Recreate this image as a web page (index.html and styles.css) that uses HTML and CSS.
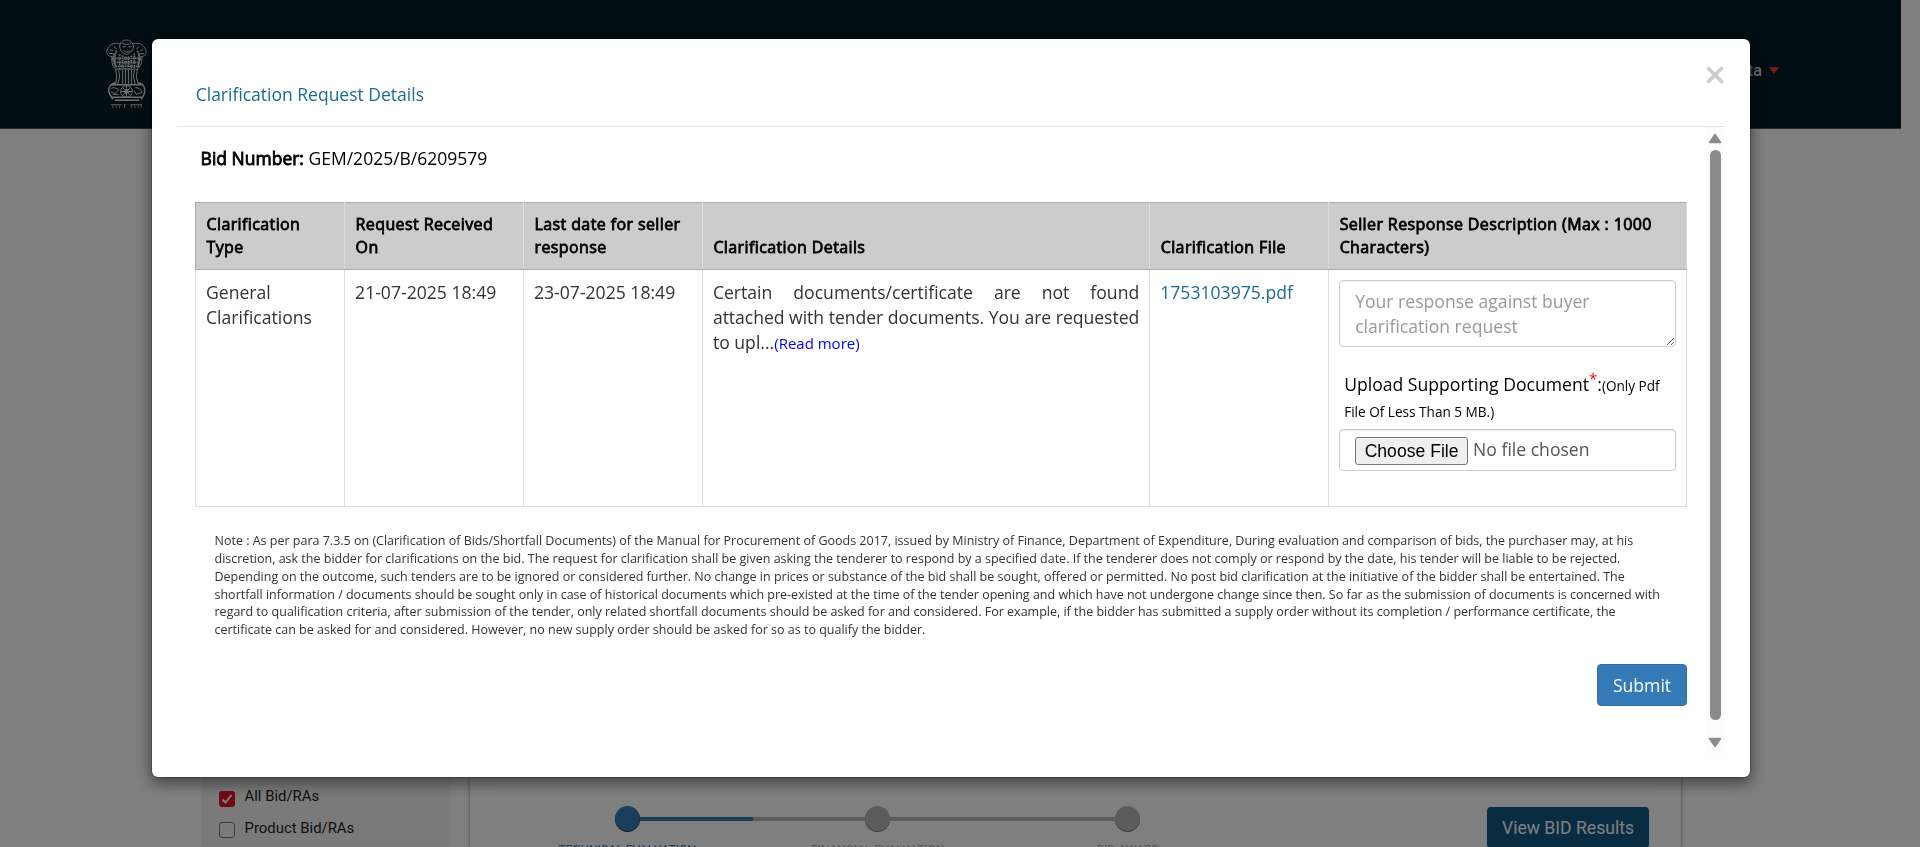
FILE: index.html
```html
<!DOCTYPE html>
<html lang="en">
<head>
<meta charset="utf-8">
<title>Clarification Request Details</title>
<link rel="stylesheet" href="styles.css">
</head>
<body>
<div class="page">
  <header class="site-header">
    <svg class="emblem" viewBox="0 0 42 72" preserveAspectRatio="none" fill="none" stroke="#e0e0e0" stroke-width="1">
      <path d="M14 7c1-5 5-6 7-6s6 1 7 6c0 4-2 7-7 9-5-2-7-5-7-9z"/>
      <path d="M14 5C8 3 3 6 1 12c-1 4 2 6 5 6l1 4M28 5c6-2 11 1 13 7 1 4-2 6-5 6l-1 4"/>
      <path d="M17 8h3M23 8h3M18 12c2 2 5 2 7 0M16 4c2 2 8 2 10 0M4 11l3 1M38 11l-3 1M3 15h4M39 15h-4M8 8l3 2M34 8l-3 2"/>
      <path d="M6 18c0 6 0 10 4 13h22c4-3 5-8 5-13"/>
      <path stroke-width="1.7" stroke-dasharray="1.6 .7" d="M8 15c-1 5 0 10 2 14M11 12c-3 5-3 12 0 18M14 16v15M17 17v14M20 18v13M23 18v13M26 17v14M29 15v15M32 12c3 5 2 12 0 18M34 15c1 5 0 10-1 14M9 20h25M9 24h25M10 28h22"/>
      <path d="M10 31l1 8-1 7M13 32l1 7-2 8M17 32v15M20 32v14M23 32v14M26 32v15M29 32l-1 7 2 8M32 31l-1 8 2 7"/>
      <path stroke-width="1.5" d="M10 45c-6 1-9 6-6 12l3 5M33 45c6 1 8 6 6 12l-3 5M6 47h30M5 60h33M9 63h25"/>
      <circle cx="21" cy="54" r="6"/><circle cx="21" cy="54" r="2"/>
      <path d="M21 48v12M15 54h12M17 50l8 8M25 50l-8 8M5 51c3-2 6 0 8 1-2 4-5 5-8 2M30 50c4 0 6 2 7 5l-6 2-2-4M7 57h6"/>
      <path stroke="#b0b0b0" d="M5 67.500h11M18 67.500h3M25 67.500h12M7 67v4M10 68l1 3M14 67v4M19 67v4M26 67v4M29 68l1 3M33 67v4M36 67v4"/>
    </svg>
    <div class="user"><span>Datta</span><i class="caret"></i></div>
  </header>
  <main class="content">
    <aside class="sidebar">
      <div class="check-row"><span class="box checked"><svg viewBox="0 0 16 16"><path d="M3.5 8.5l3 3 6-7.5" fill="none" stroke="#fff" stroke-width="2"/></svg></span><span>All Bid/RAs</span></div>
      <div class="check-row"><span class="box"></span><span>Product Bid/RAs</span></div>
    </aside>
    <section class="card">
      <div class="card-row">
        <div class="steps">
          <div class="step current"><i class="dot"></i><span>TECHNICAL EVALUATION</span></div>
          <div class="step middle"><i class="dot"></i><span>FINANCIAL EVALUATION</span></div>
          <div class="step last"><i class="dot"></i><span>BID AWARD</span></div>
        </div>
        <div class="results">View BID Results</div>
      </div>
    </section>
  </main>
</div>

<div class="backdrop">
  <div class="modal">
    <div class="modal-header">
      <h4>Clarification Request Details</h4>
      <svg class="close" viewBox="0 0 18 18"><path d="M1.500 1.500l15 15M16.500 1.500l-15 15" stroke="#ccc" stroke-width="3.6"/></svg>
    </div>
    <div class="modal-body">
      <div class="scroll-content">
        <p class="bid"><b>Bid Number:</b> GEM/2025/B/6209579</p>
        <table class="requests">
          <colgroup><col class="c10"><col class="c12"><col class="c12"><col class="c30"><col class="c12"><col class="c24"></colgroup>
          <thead>
            <tr><th>Clarification<br>Type</th><th>Request Received<br>On</th><th>Last date for seller<br>response</th><th>Clarification Details</th><th>Clarification File</th><th>Seller Response Description (Max : 1000<br>Characters)</th></tr>
          </thead>
          <tbody>
            <tr>
              <td>General Clarifications</td>
              <td>21-07-2025 18:49</td>
              <td>23-07-2025 18:49</td>
              <td class="details"><span class="line">Certain documents/certificate are not found</span> <span class="line tight">attached with tender documents. You are requested</span> <span>to upl...</span><a class="more">(Read more)</a></td>
              <td><a class="file">1753103975.pdf</a></td>
              <td>
                <textarea class="field" placeholder="Your response against buyer clarification request"></textarea>
                <div class="label">Upload Supporting Document<span class="star">*</span>:<small>(Only Pdf<br>File Of Less Than 5 MB.)</small></div>
                <div class="field upload"><span class="choose">Choose File</span><span>No file chosen</span></div>
              </td>
            </tr>
          </tbody>
        </table>
        <p class="note">Note : As per para 7.3.5 on (Clarification of Bids/Shortfall Documents) of the Manual for Procurement of Goods 2017, issued by Ministry of Finance, Department of Expenditure, During evaluation and comparison of bids, the purchaser may, at his<br>discretion, ask the bidder for clarifications on the bid. The request for clarification shall be given asking the tenderer to respond by a specified date. If the tenderer does not comply or respond by the date, his tender will be liable to be rejected.<br>Depending on the outcome, such tenders are to be ignored or considered further. No change in prices or substance of the bid shall be sought, offered or permitted. No post bid clarification at the initiative of the bidder shall be entertained. The<br>shortfall information / documents should be sought only in case of historical documents which pre-existed at the time of the tender opening and which have not undergone change since then. So far as the submission of documents is concerned with<br>regard to qualification criteria, after submission of the tender, only related shortfall documents should be asked for and considered. For example, if the bidder has submitted a supply order without its completion / performance certificate, the<br>certificate can be asked for and considered. However, no new supply order should be asked for so as to qualify the bidder.</p>
        <div class="actions"><span class="submit">Submit</span></div>
      </div>
      <div class="scrollbar">
        <svg viewBox="0 0 14 11"><path d="M7 1.500L12.500 9.500H1.500z" fill="#8b8b8b" stroke="#8b8b8b" stroke-width="1.5" stroke-linejoin="round"/></svg>
        <i class="thumb"></i>
        <svg viewBox="0 0 14 11"><path d="M7 9.500L12.500 1.500H1.500z" fill="#8b8b8b" stroke="#8b8b8b" stroke-width="1.5" stroke-linejoin="round"/></svg>
      </div>
    </div>
  </div>
</div>
</body>
</html>
```
FILE: styles.css
```css
* { box-sizing: border-box; }
html, body { height: 847px; overflow: hidden; }
body { margin: 0; background: #fff; font: 17.6px/25.14px "Open Sans", "Liberation Sans", sans-serif; color: #333; }
p, h4 { margin: 0; font-weight: 400; }

/* Page behind the dialog */
.page { height: 847px; overflow: hidden; display: flex; flex-direction: column; font-family: Roboto, sans-serif; }
.site-header { flex: none; width: 1901px; height: 129px; padding: 39px 122px 0 106px; display: flex; justify-content: space-between; background: #041c28; border-bottom: 1px solid #555; }
.emblem { width: 41px; height: 70px; }
.user { display: flex; align-items: flex-start; gap: 7px; padding-top: 19px; color: #eee; font-size: 16px; line-height: 26px; }
.caret { margin-top: 9px; border: 5.5px solid transparent; border-top: 7px solid #f03a17; border-bottom: 0; }
.content { flex: 1; display: flex; padding-left: 201px; }
.sidebar { width: 250px; padding: 653px 0 0 18px; background: #f4f4f4; color: #222; font-size: 14.9px; }
.check-row { display: flex; align-items: center; gap: 9.5px; height: 32px; line-height: 24px; }
.check-row > span:last-child { margin-top: -5px; }
.box { width: 16px; height: 16px; border: 1px solid #767676; border-radius: 3px; }
.box.checked { background: #e0102a; border: 0; margin-top: 2px; }
.box svg { display: block; }
.card { width: 1213px; margin-left: 18px; padding: 657px 32px 0; border: 1px solid #d2d2d2; border-width: 0 1px; box-shadow: 0 0 3px rgba(0,0,0,.25); }
.card-row { display: flex; justify-content: space-between; border-top: 1px solid #eee; padding-top: 20px; }
.steps { display: flex; align-items: flex-start; height: 60px; width: 751px; background: linear-gradient(#337ab7, #337ab7) 124px 10px / 127px 4px no-repeat, linear-gradient(#b9b9b9, #b9b9b9) 251px 10px / 375px 4px no-repeat; }
.step { width: 250.4px; display: flex; flex-direction: column; align-items: center; color: #b0b0b0; font-size: 12px; line-height: 14px; gap: 12px; flex: none; }
.dot { width: 25px; height: 25px; margin-top: -1px; border-radius: 50%; background: #b9b9b9; box-shadow: 0 1px 0 #777; }
.current { color: #337ab7; }
.current .dot { background: #337ab7; box-shadow: 0 1px 0 #18395a; }
.results { width: 162px; height: 41px; border-radius: 4px; background: #105a84; color: #fff; font-size: 17.6px; line-height: 42px; text-align: center; }

/* Dialog */
.backdrop { position: fixed; inset: 0; padding: 38px 0 0 151px; background: rgba(0,0,0,.5); }
.modal { width: 1600px; height: 740px; padding: 0 25px; background: #fff; background-clip: padding-box; border: 1px solid rgba(0,0,0,.2); border-radius: 7px; box-shadow: 0 5px 15px rgba(0,0,0,.5); }
.modal-header { height: 88px; padding: 43px 1px 0 18.7px; display: flex; justify-content: space-between; border-bottom: 1px solid #e5e5e5; }
.modal-header h4 { color: #1c6a96; font-size: 17.5px; }
.close { width: 18px; height: 18px; margin-top: -16px; }
.modal-body { display: flex; justify-content: space-between; padding-right: 1px; }
.scroll-content { width: 1492px; margin-left: 18px; }
.bid { padding: 19px 0 0 5.6px; height: 75px; color: #000; font-size: 17.5px; }
b, th { font-weight: 400; -webkit-text-stroke: .8px currentColor; }
.requests { width: 1492px; table-layout: fixed; border-collapse: collapse; }
.c10 { width: 10%; } .c12 { width: 12%; } .c30 { width: 30%; } .c24 { width: 24%; }
th { height: 67px; padding: 10px 0 10px 10.5px; background: #ccc; border: 1px solid #ddd; border-top-color: #aaa; border-bottom: 1px solid #aaa; color: #000; font-size: 16px; line-height: 22.86px; letter-spacing: .39px; text-align: left; vertical-align: bottom; white-space: nowrap; }
th:first-child { border-left-color: #aaa; }
td { height: 237px; padding: 10px; border: 1px solid #ddd; vertical-align: top; }
.line { display: block; white-space: nowrap; text-align-last: justify; }
.tight { letter-spacing: -.05px; word-spacing: -.35px; }
.more { color: #00f; font-size: 15px; }
.file { color: #1c6a96; }
.field { display: block; width: 100%; border: 1px solid #ccc; border-radius: 4px; box-shadow: inset 0 1px 1px rgba(0,0,0,.075); }
textarea.field { height: 67px; padding: 8px 15px 6px; font: inherit; overflow: hidden; }
textarea::placeholder { color: #999; opacity: 1; }
.label { margin: 24px 0 0 5px; color: #000; line-height: 26px; white-space: nowrap; }
.label small { font-size: 13.6px; line-height: 1; }
.star { color: red; font-size: 15px; line-height: 0; vertical-align: 7px; }
.upload { display: flex; align-items: center; gap: 5px; height: 42px; margin-top: 6px; padding: 0 15px; color: #555; }
.choose { height: 28px; margin-top: 1px; padding: 0 8.5px; border: 1px solid #767676; border-radius: 3px; background: #efefef; color: #000; font: 17.6px/26px "Liberation Sans", sans-serif; }
.note { margin: 25px 0 0 19.5px; font-size: 12.5px; line-height: 17.86px; white-space: nowrap; }
.actions { display: flex; justify-content: flex-end; margin-top: 25px; }
.submit { width: 90px; height: 42px; border: 1px solid #2e6da4; border-radius: 4px; background: #337ab7; color: #fff; line-height: 40px; text-align: center; }
.scrollbar { width: 18px; height: 626px; padding-top: 6px; display: flex; flex-direction: column; align-items: center; background: #fcfcfc; }
.scrollbar svg { width: 14px; height: 11px; }
.thumb { width: 11px; height: 570px; margin: 6px 0 17px; border-radius: 6px; background: #8b8b8b; }
```
